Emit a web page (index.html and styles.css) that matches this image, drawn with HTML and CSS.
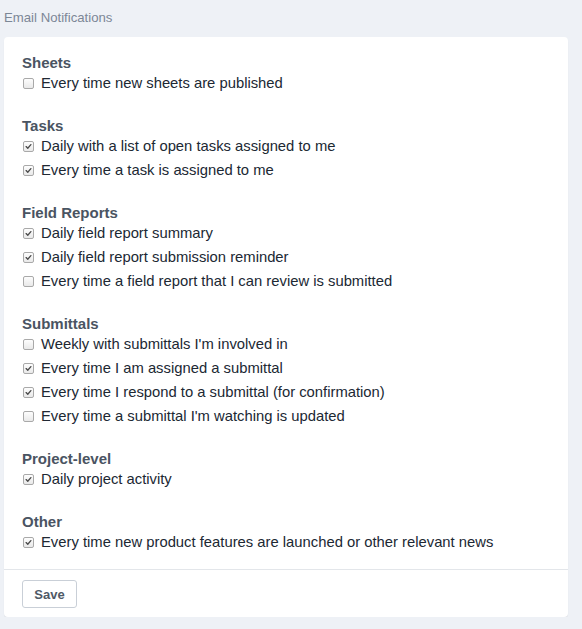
FILE: index.html
```html
<!DOCTYPE html>
<html>
<head>
<meta charset="utf-8">
<link rel="stylesheet" href="styles.css">
</head>
<body>
<div class="page">
  <div class="title">Email Notifications</div>
  <div class="card">
    <div class="body">
      <div class="section">
        <div class="heading">Sheets</div>
        <div class="item"><span class="box"></span>Every time new sheets are published</div>
      </div>
      <div class="section">
        <div class="heading">Tasks</div>
        <div class="item"><span class="box on"><svg viewBox="0 0 11 11"><path d="M2.6 5.6 L4.6 7.6 L8.4 3.2" /></svg></span>Daily with a list of open tasks assigned to me</div>
        <div class="item"><span class="box on"><svg viewBox="0 0 11 11"><path d="M2.6 5.6 L4.6 7.6 L8.4 3.2" /></svg></span>Every time a task is assigned to me</div>
      </div>
      <div class="section">
        <div class="heading">Field Reports</div>
        <div class="item"><span class="box on"><svg viewBox="0 0 11 11"><path d="M2.6 5.6 L4.6 7.6 L8.4 3.2" /></svg></span>Daily field report summary</div>
        <div class="item"><span class="box on"><svg viewBox="0 0 11 11"><path d="M2.6 5.6 L4.6 7.6 L8.4 3.2" /></svg></span>Daily field report submission reminder</div>
        <div class="item"><span class="box"></span>Every time a field report that I can review is submitted</div>
      </div>
      <div class="section">
        <div class="heading">Submittals</div>
        <div class="item"><span class="box"></span>Weekly with submittals I'm involved in</div>
        <div class="item"><span class="box on"><svg viewBox="0 0 11 11"><path d="M2.6 5.6 L4.6 7.6 L8.4 3.2" /></svg></span>Every time I am assigned a submittal</div>
        <div class="item"><span class="box on"><svg viewBox="0 0 11 11"><path d="M2.6 5.6 L4.6 7.6 L8.4 3.2" /></svg></span>Every time I respond to a submittal (for confirmation)</div>
        <div class="item"><span class="box"></span>Every time a submittal I'm watching is updated</div>
      </div>
      <div class="section">
        <div class="heading">Project-level</div>
        <div class="item"><span class="box on"><svg viewBox="0 0 11 11"><path d="M2.6 5.6 L4.6 7.6 L8.4 3.2" /></svg></span>Daily project activity</div>
      </div>
      <div class="section">
        <div class="heading">Other</div>
        <div class="item"><span class="box on"><svg viewBox="0 0 11 11"><path d="M2.6 5.6 L4.6 7.6 L8.4 3.2" /></svg></span>Every time new product features are launched or other relevant news</div>
      </div>
    </div>
    <div class="footer">
      <button class="save">Save</button>
    </div>
  </div>
</div>
</body>
</html>
```

FILE: styles.css
```css
html, body {
  margin: 0;
  padding: 0;
  background: #eef1f6;
  font-family: "Liberation Sans", Arial, sans-serif;
}
.page {
  padding: 10px 14px 0 4px;
}
.title {
  font-size: 13.2px;
  line-height: 16px;
  color: #7c8796;
  margin-bottom: 11px;
}
.card {
  background: #fff;
  border-radius: 4px;
  box-shadow: 0 1px 1px rgba(0,0,0,0.08);
}
.body {
  padding: 17px 18px 15px 18px;
  display: flex;
  flex-direction: column;
  gap: 22px;
}
.heading {
  font-size: 15px;
  font-weight: bold;
  line-height: 17px;
  color: #4a5462;
}
.item {
  display: flex;
  align-items: center;
  font-size: 14.8px;
  line-height: 24px;
  color: #202833;
}
.box {
  width: 11px;
  height: 11px;
  box-sizing: border-box;
  border: 1px solid #a9a9a9;
  border-radius: 2px;
  background: linear-gradient(#fdfdfd, #e9e9e9);
  margin: 0 7px 0 1px;
  display: inline-flex;
  flex: none;
}
.box svg {
  width: 9px;
  height: 9px;
}
.box svg path {
  fill: none;
  stroke: #4a4a4a;
  stroke-width: 1.6;
  stroke-linecap: round;
  stroke-linejoin: round;
}
.footer {
  border-top: 1px solid #e3e6ea;
  padding: 10px 18px 9px 18px;
}
.save {
  font-family: "Liberation Sans", Arial, sans-serif;
  font-size: 13px;
  font-weight: bold;
  color: #4f5966;
  background: #fff;
  border: 1px solid #c9cfd7;
  border-radius: 3px;
  width: 55px;
  height: 28px;
  padding: 0;
}
```
